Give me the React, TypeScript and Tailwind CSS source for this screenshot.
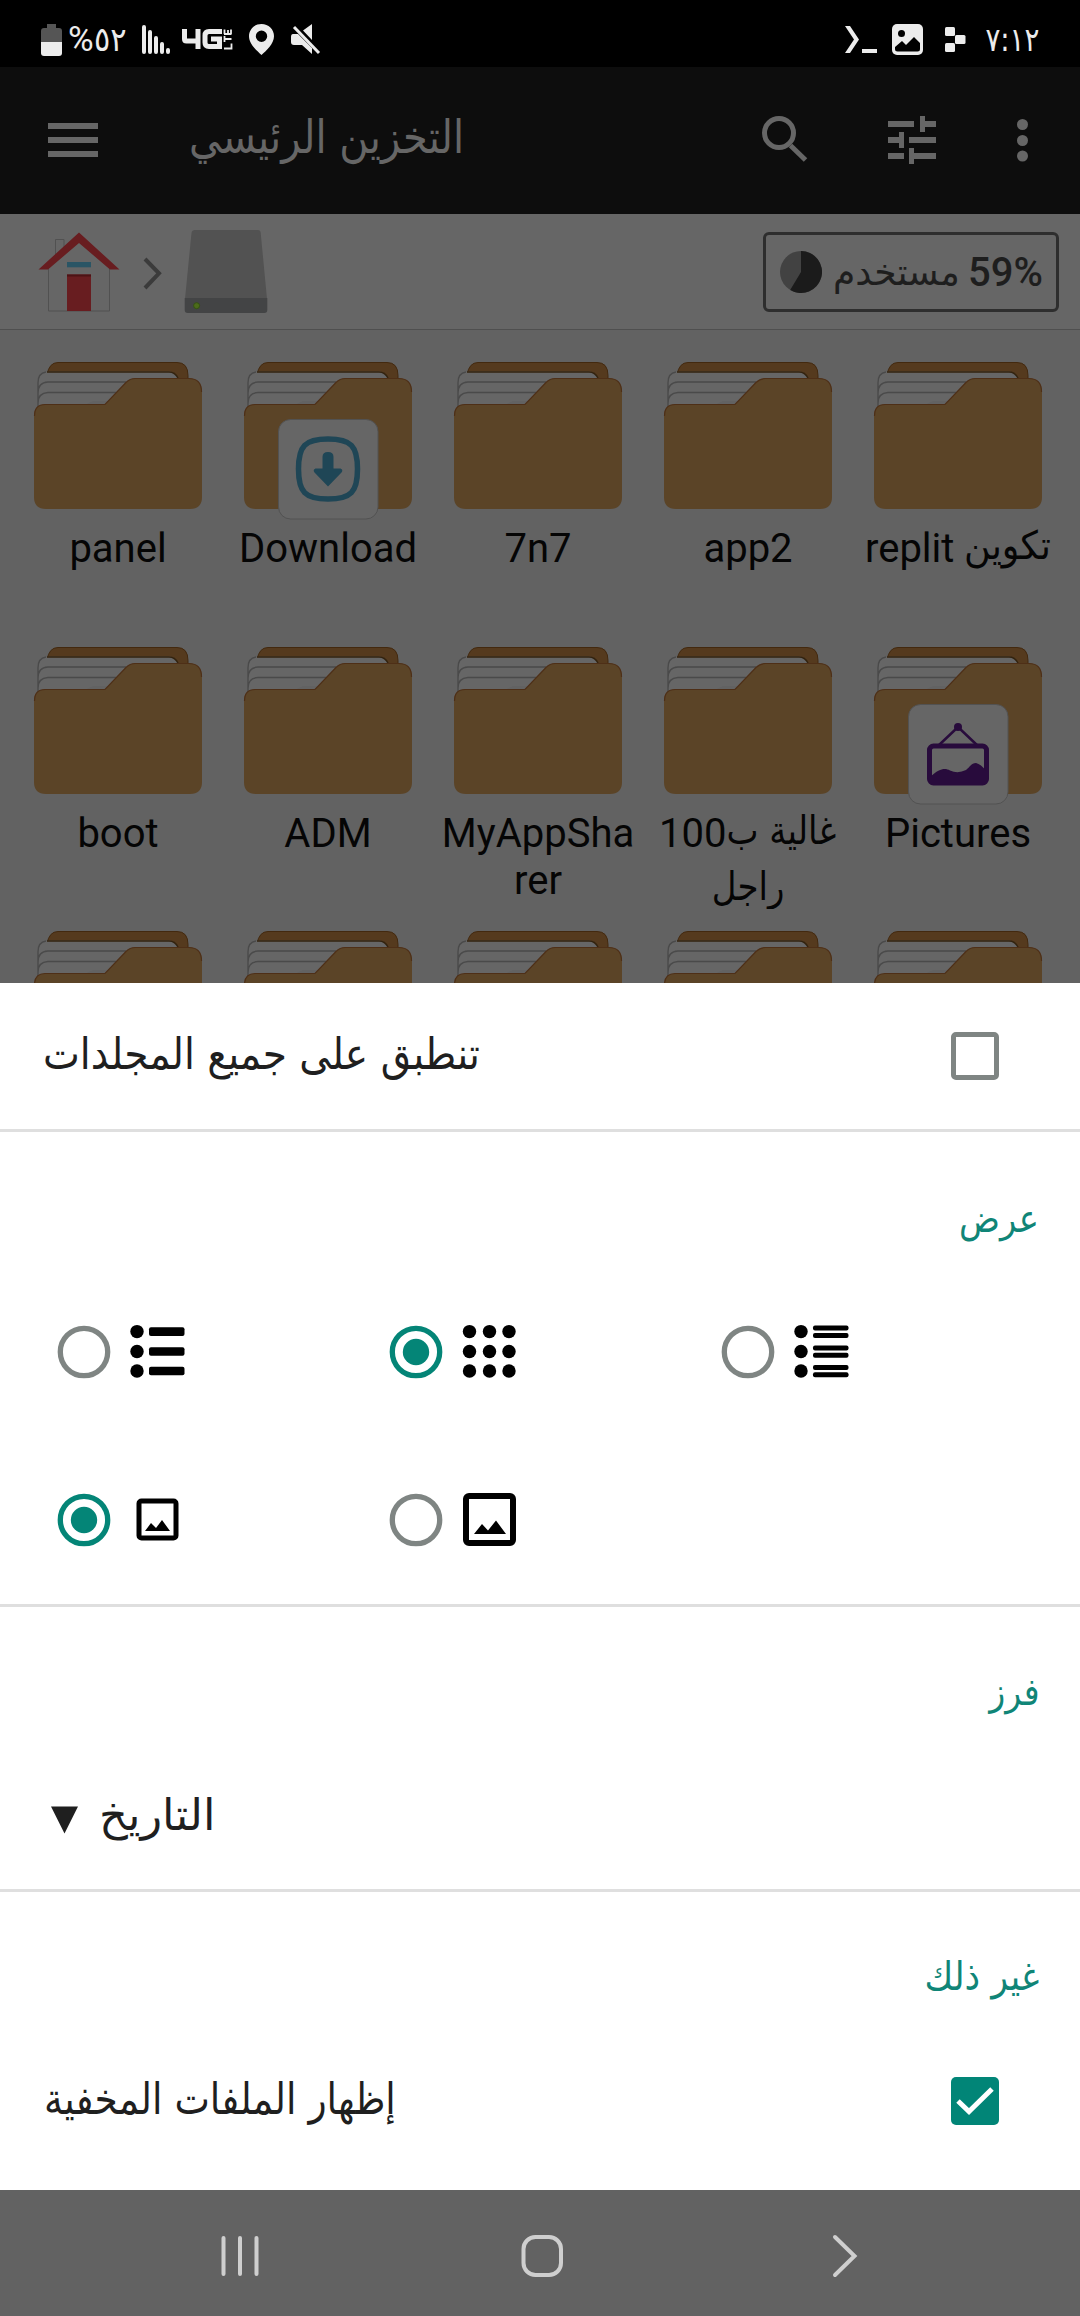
import React from "react";

const AR = "font-['DejaVu_Sans',sans-serif]";

function Arabic({ className, children }: { className: string; children: React.ReactNode }) {
  return (
    <span dir="rtl" className={`inline-block whitespace-nowrap ${AR} ${className}`}>
      {children}
    </span>
  );
}

function StatusBar() {
  return (
    <header className="flex h-[67px] items-start bg-black pt-[22px] text-[#ececec]">
      <svg className="ml-[40px] h-9 w-6" viewBox="40 22 24 36">
        <path d="M47 24h9v4h3q3 0 3 3v11H41V31q0-3 3-3h3z" fill="#555" />
        <path d="M41 42h21v11q0 3-3 3H44q-3 0-3-3z" fill="#ececec" />
      </svg>
      <span className="ml-[4px] flex h-9 w-[60px] items-center whitespace-nowrap">
        <span className="font-['Roboto'] text-[35px] leading-9">%</span>
        <Arabic className="origin-left scale-x-[0.92] text-[33px] leading-9">٥٢</Arabic>
      </span>
      <svg className="ml-[12px] h-9 w-8" viewBox="140 22 32 36" stroke="#ececec" strokeWidth="4" strokeLinecap="round">
        <path d="M144 27v25M150 32v20M156 38v14M162 44v8M168 50v2" />
      </svg>
      <span className="ml-[9px] flex h-9 w-[52px]">
        <svg className="h-9 w-[52px]" viewBox="181 22 52 36" fill="none" stroke="#ececec" strokeWidth="5">
          <path d="M184.500 29v10q0 2 2 2h14M198 29v20" />
          <path d="M222 31.500h-13q-4 0-4 4v7q0 4 4 4h10.500v-7.500H211" />
          <path d="M224 48.500h7.500v-5M224 39h7.500M224.500 36v6M224 34h7.500M224.500 29.500v4.500M231 29.500v4.500M228 30v4" strokeWidth="1.800" />
        </svg>
      </span>
      <svg className="ml-[15px] h-9 w-7" viewBox="248 22 28 36" fill="#ececec" fillRule="evenodd">
        <path d="M261.500 24c7 0 12.500 5.300 12.500 12.300C274 44 266 51 261.500 55C257 51 249 44 249 36.300C249 29.300 254.500 24 261.500 24zM261.500 30.500a5.700 5.700 0 1 0 0 11.400a5.700 5.700 0 1 0 0-11.400z" />
      </svg>
      <svg className="ml-[14px] h-9 w-8" viewBox="290 22 32 36" fill="#ececec">
        <path d="M312 24v16l-9-9.500zM293 34h5l14 14v6l-10-9h-8q-3 0-3-3v-5q0-3 2-3z" />
        <path d="M294 27l25 26" stroke="#ececec" strokeWidth="3" />
      </svg>
      <svg className="ml-[522px] h-9 w-9" viewBox="844 22 36 36" fill="#ececec">
        <path d="M845 26h5l9 13.500L850 53h-5l9-13.500zM862 49h15v4h-15z" />
      </svg>
      <svg className="ml-[11px] h-9 w-8" viewBox="891 22 32 36">
        <rect x="892" y="24" width="31" height="31" rx="5" fill="#ececec" />
        <circle cx="901.500" cy="33.500" r="3.500" />
        <path d="M895 47l7-6 4 4 8-8 6 6v6q0 2.500-2.500 2.500h-20q-2.500 0-2.500-2.500z" />
      </svg>
      <svg className="ml-[21px] h-9 w-6" viewBox="944 22 24 36" fill="#ececec">
        <rect x="945" y="27" width="10" height="9" rx="1.500" />
        <rect x="955" y="35" width="10.500" height="9" rx="1.500" />
        <rect x="945" y="43" width="10" height="9" rx="1.500" />
      </svg>
      <Arabic className="ml-[21px] w-[60px] origin-left scale-x-[0.84] text-right text-[33px] leading-9">٧:١٢</Arabic>
    </header>
  );
}

function AppBar() {
  return (
    <div className="flex h-[147px] items-center bg-[#0d0d0d] pb-px">
      <svg className="ml-[48px] h-9 w-[50px]" viewBox="0 0 50 36" fill="#666">
        <path d="M0 1h50v6H0zM0 15h50v6H0zM0 29h50v6H0z" />
      </svg>
      <span className="mt-[-6px] ml-[91px] flex w-[275px]">
        <Arabic className="origin-left scale-y-[1.14] text-[40px] text-[#666]">التخزين الرئيسي</Arabic>
      </span>
      <svg className="ml-[297px] h-12 w-12" viewBox="761 116 48 48" fill="none" stroke="#666" strokeWidth="5">
        <circle cx="779" cy="133" r="14.500" />
        <path d="M790.500 145.500L805.500 160" />
      </svg>
      <svg className="ml-[79px] h-12 w-12" viewBox="0 0 48 48" fill="#666">
        <path d="M0 5h26v6H0zM32 0h5v5h11v6H37v5h-5zM0 21h11v-5h5v16h-5v-5H0zM21 21h27v6H21zM0 37h16v6H0zM21 32h5v5h22v6H26v5h-5z" />
      </svg>
      <svg className="ml-[80px] h-12 w-3" viewBox="0 0 12 48" fill="#666">
        <circle cx="6.500" cy="8.500" r="5.500" />
        <circle cx="6.500" cy="24.500" r="5.500" />
        <circle cx="6.500" cy="40" r="5.500" />
      </svg>
    </div>
  );
}

function PathBar() {
  return (
    <div className="flex h-[116px] items-start border-b border-[#4f4f4f] bg-[#666] pt-[14px]">
      <svg className="ml-[36px] h-[88px] w-[86px]" viewBox="36 228 86 88">
        <path d="M55.500 262v-22.500h8.500v14" fill="#666" stroke="#515151" />
        <path d="M48.500 268v43h61v-43L79 240z" fill="#666" stroke="#515151" />
        <path d="M79 232.500l40.500 37H110L79 243l-31 26.500h-9.500z" fill="#681d20" />
        <rect x="67" y="262" width="24" height="5.300" fill="#2a5565" />
        <rect x="67" y="274.500" width="24" height="36.500" fill="#681d20" />
        <rect x="67" y="274.500" width="24" height="2" fill="#4c1315" />
      </svg>
      <svg className="ml-[20px] h-[88px] w-5" viewBox="142 228 20 88" fill="none" stroke="#3b3b3b" strokeWidth="4">
        <path d="M145 259l14 14.300L145 288" />
      </svg>
      <svg className="ml-[20px] h-[88px] w-[88px]" viewBox="182 228 88 88">
        <path d="M195 230h63q2.500 0 2.700 3L267 299H185l6.500-66q.3-3 3.500-3z" fill="#525252" />
        <path d="M184.700 298h82.600v12q0 3-3 3h-76.600q-3 0-3-3z" fill="#434445" />
        <circle cx="196.600" cy="305.700" r="3" fill="#4c6b1a" stroke="#345213" />
      </svg>
      <div className="ml-[493px] mt-1 flex h-20 w-[296px] items-center rounded-[6px] border-[3px] border-[#2e2e2e] pl-[14px]">
        <svg className="h-[42px] w-[42px]" viewBox="0 0 42 42">
          <circle cx="21" cy="21" r="21" fill="#424242" />
          <path d="M21 21V0a21 21 0 1 1-10.800 39z" fill="#1b1b1b" />
        </svg>
        <span className="ml-[11px] flex w-[124px]">
          <Arabic className="origin-left scale-x-[1.06] scale-y-110 text-[34px] text-[#1e1e1e]">مستخدم</Arabic>
        </span>
        <span className="mt-[2px] ml-[11px] font-['Roboto'] text-[40px] font-medium text-[#1e1e1e]">59%</span>
      </div>
    </div>
  );
}

function FolderIcon() {
  return (
    <svg className="h-[150px] w-[170px]" viewBox="0 0 170 150">
      <path d="M14 14Q16 1.500 25 1.500H144q11 0 11 13V26H14z" fill="#553a1e" stroke="#43290f" />
      <path d="M5 50V22q0-11 10-11.500H136q6 0 9 6.500V40H60L40 50z" fill="#666" />
      <path d="M14 11H136q6 0 9 6" fill="none" stroke="#33230f" strokeWidth="1.500" />
      <path d="M5 50V22q0-10 8-11M5 43V32q0-10.500 10-11H93M5 48V42q0-10 10-10.500H83" fill="none" stroke="#4a4a4a" strokeWidth="1.400" />
      <path d="M1 55Q1 43.500 12 43.500H72L93 21.500Q97 17.500 102 17.500H156Q169 17.500 169 31V136Q169 148 157 148H13Q1 148 1 136z" fill="#5b4427" />
      <path d="M1.500 55Q1.500 43.500 12 43.500H72L93 21.500Q97 17.500 102 17.500H156Q168.500 17.500 168.500 31" fill="none" stroke="#4e2f17" strokeWidth="1.200" />
    </svg>
  );
}

function DownloadBadge() {
  return (
    <svg className="absolute top-[58px] left-[35px] h-[101px] w-[101px]" viewBox="0 0 101 101">
      <rect x=".5" y=".5" width="99.500" height="99.500" rx="12" fill="#666" stroke="#525252" />
      <path d="M50 20C73 20 79.500 27 79.500 50S73 80 50 80S20.500 73 20.500 50S27 20 50 20z" fill="none" stroke="#1f4656" strokeWidth="5.500" />
      <path d="M50 33q5.500 0 5.500 5v11.500h7q3 1 1 4L50 67.500L36.500 53.500q-2-3 1-4h7V38q0-5 5.500-5z" fill="#1f4656" />
    </svg>
  );
}

function PicturesBadge() {
  return (
    <svg className="absolute top-[58px] left-[35px] h-[101px] w-[101px]" viewBox="0 0 101 101">
      <rect x=".5" y=".5" width="99.500" height="99.500" rx="12" fill="#666" stroke="#525252" />
      <circle cx="50" cy="23" r="4" fill="#280b3c" />
      <path d="M30 42L50 23l20 19" fill="none" stroke="#280b3c" strokeWidth="2.500" />
      <rect x="21.500" y="42" width="57" height="37" rx="4" fill="none" stroke="#280b3c" strokeWidth="5" />
      <path d="M22 73C32 64 37 64 42 66.500Q50 70 58 66C62 63 63 59 68 59Q73 60 78 67v12H22z" fill="#280b3c" />
    </svg>
  );
}

function Folder({ badge, children }: { badge?: React.ReactNode; children?: React.ReactNode }) {
  return (
    <div className="flex h-[284.500px] w-[210px] flex-col items-center">
      <div className="relative h-[150px] w-[170px] shrink-0">
        <FolderIcon />
        {badge}
      </div>
      <div className="mt-[14px] flex flex-col items-center font-['Roboto'] text-[40px] leading-[47px] whitespace-nowrap text-[#050505]">
        {children}
      </div>
    </div>
  );
}

function FolderGrid() {
  return (
    <div className="grid h-[653px] grid-cols-[repeat(5,210px)] content-start overflow-hidden bg-[#626262] pt-[31px] pl-[13px]">
      <Folder>panel</Folder>
      <Folder badge={<DownloadBadge />}>Download</Folder>
      <Folder>7n7</Folder>
      <Folder>app2</Folder>
      <Folder>
        <span className="flex h-[47px] w-[186px]">
          replit
          <Arabic className="mt-[-3px] ml-[10px] origin-left scale-x-[1.07] scale-y-[1.15] text-[34px] leading-[47px]">تكوين</Arabic>
        </span>
      </Folder>
      <Folder>boot</Folder>
      <Folder>ADM</Folder>
      <Folder>
        <span>MyAppSha</span>
        <span>rer</span>
      </Folder>
      <Folder>
        <span className="flex h-[47px] w-[178px]">
          100
          <Arabic className="mt-[-3px] origin-left scale-y-[1.15] text-[34px] leading-[47px]">غالية ب</Arabic>
        </span>
        <Arabic className="mt-[2px] scale-y-[1.15] text-[34px] leading-[54px]">راجل</Arabic>
      </Folder>
      <Folder badge={<PicturesBadge />}>Pictures</Folder>
      <Folder />
      <Folder />
      <Folder />
      <Folder />
      <Folder />
    </div>
  );
}

function Radio({ checked = false }: { checked?: boolean }) {
  return (
    <svg className="h-14 w-14" viewBox="0 0 56 56" fill="none">
      <circle cx="28" cy="28" r="23.700" stroke={checked ? "#048577" : "#7f8583"} strokeWidth="5.300" />
      {checked && <circle cx="28" cy="28" r="13.200" fill="#048577" />}
    </svg>
  );
}

function Option({ checked, children }: { checked?: boolean; children: React.ReactNode }) {
  return (
    <div className="flex h-14 w-[332px] items-center">
      <Radio checked={checked} />
      <svg className="ml-[18px] h-14 w-14" viewBox="0 0 56 56">
        {children}
      </svg>
    </div>
  );
}

const rows = [7.6, 27.5, 47];

function Dots({ x }: { x: number }) {
  return (
    <>
      {rows.map((y) => (
        <circle key={y} cx={x} cy={y} r="6.700" />
      ))}
    </>
  );
}

function ViewOptions() {
  return (
    <div className="flex flex-col pl-[56px]">
      <div className="flex">
        <Option>
          <Dots x={7} />
          {rows.map((y) => (
            <rect key={y} x="19" y={y - 4.3} width="35.500" height="8.600" rx="2" />
          ))}
        </Option>
        <Option checked>
          <Dots x={7.500} />
          <Dots x={27.500} />
          <Dots x={47} />
        </Option>
        <Option>
          <Dots x={7} />
          {rows.map((y) => (
            <g key={y}>
              <rect x="19" y={y - 6} width="35.500" height="5" rx="2" />
              <rect x="19" y={y + 1.3} width="35.500" height="5" rx="2" />
            </g>
          ))}
        </Option>
      </div>
      <div className="mt-[112px] flex">
        <Option checked>
          <rect x="9" y="9" width="37" height="37" rx="2.500" fill="none" stroke="black" strokeWidth="5" />
          <path d="M15 39l6-8 5 5 6-8 8 11z" />
        </Option>
        <Option>
          <rect x="4" y="4" width="47" height="47" rx="3" fill="none" stroke="black" strokeWidth="6" />
          <path d="M12 42l8-10 6 6.500 8-10L44 42z" />
        </Option>
      </div>
    </div>
  );
}

function Sheet() {
  return (
    <main className="flex h-[1207px] flex-col bg-white text-[#1f1f1f]">
      <div className="flex h-[149px] items-center justify-between border-b-[3px] border-[#dfdfdf] pr-[81px] pl-[43px]">
        <span className="mt-[-4px] flex w-[434px]">
          <Arabic className="origin-left scale-x-[1.03] scale-y-[1.15] text-[38px]">تنطبق على جميع المجلدات</Arabic>
        </span>
        <span className="h-12 w-12 rounded-[5px] border-[5px] border-[#7f8583]" />
      </div>
      <section className="h-[475px] border-b-[3px] border-[#dfdfdf]">
        <div className="flex h-[192px] justify-end pt-[59px] pr-[41px] text-[#108577]">
          <Arabic className="h-14 origin-right scale-x-[0.94] scale-y-105 text-[36px] leading-14">عرض</Arabic>
        </div>
        <ViewOptions />
      </section>
      <section className="h-[285px] border-b-[3px] border-[#dfdfdf]">
        <div className="flex h-[173px] justify-end pt-[57px] pr-[41px] text-[#108577]">
          <Arabic className="h-14 origin-right scale-x-[0.92] scale-y-105 text-[36px] leading-14">فرز</Arabic>
        </div>
        <div className="flex h-[84px] items-center pl-[51px]">
          <svg className="mt-[-4px] h-7 w-7" viewBox="0 0 28 28" fill="#1f1f1f">
            <path d="M0 .5h27L13.500 27.500z" />
          </svg>
          <Arabic className="mt-[-14px] ml-[20px] origin-left scale-x-[1.18] scale-y-[1.15] text-[38px]">التاريخ</Arabic>
        </div>
      </section>
      <section className="h-[298px]">
        <div className="flex h-[167px] justify-end pt-[57px] pr-[41px] text-[#108577]">
          <Arabic className="h-14 origin-right scale-x-[0.97] scale-y-110 text-[36px] leading-14">غير ذلك</Arabic>
        </div>
        <div className="flex h-[84px] items-center justify-between pr-[81px] pl-[44px]">
          <span className="mt-[-4px] flex w-[350px]">
            <Arabic className="origin-left scale-x-[0.99] scale-y-[1.15] text-[38px]">إظهار الملفات المخفية</Arabic>
          </span>
          <svg className="h-12 w-12" viewBox="0 0 48 48">
            <rect width="48" height="48" rx="5" fill="#018577" />
            <path d="M7 24l11 10.500L41 12" fill="none" stroke="white" strokeWidth="5" />
          </svg>
        </div>
      </section>
    </main>
  );
}

function NavBar() {
  return (
    <nav className="flex h-[126px] items-center bg-[#626262] pt-[6px]">
      <svg className="ml-[216px] h-12 w-12" viewBox="216 2232 48 48" stroke="#cfcfcf" strokeWidth="4" strokeLinecap="round">
        <path d="M223.500 2238v36M240 2238v36M256.500 2238v36" />
      </svg>
      <svg className="ml-[254px] h-12 w-12" viewBox="518 2232 48 48" fill="none" stroke="#cfcfcf" strokeWidth="4">
        <rect x="523.500" y="2237" width="37.500" height="38" rx="12" />
      </svg>
      <svg className="ml-[254px] h-12 w-12" viewBox="820 2232 48 48" fill="none" stroke="#cfcfcf" strokeWidth="4" strokeLinecap="round">
        <path d="M835 2237l19.500 19L835 2275" />
      </svg>
    </nav>
  );
}

export default function App() {
  return (
    <div className="flex h-[2316px] w-[1080px] flex-col overflow-hidden">
      <StatusBar />
      <AppBar />
      <PathBar />
      <FolderGrid />
      <Sheet />
      <NavBar />
    </div>
  );
}
